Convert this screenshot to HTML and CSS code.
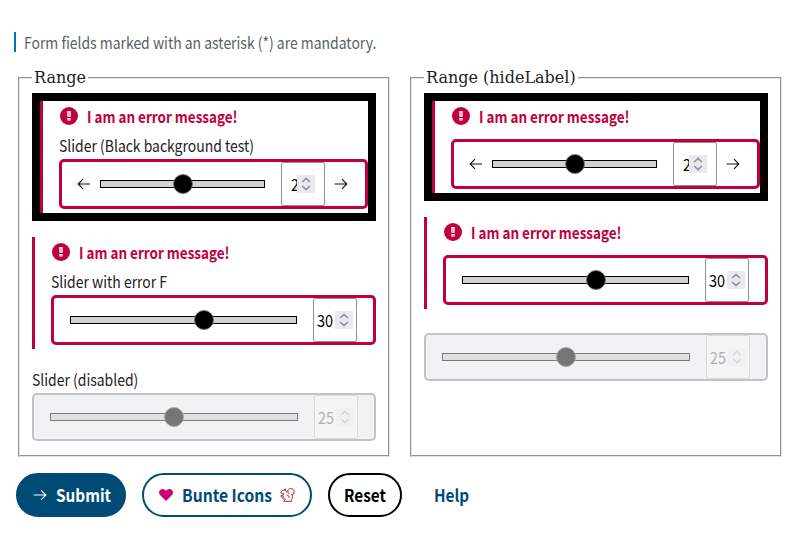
FILE: index.html
```
<!DOCTYPE html>
<html lang="en">
<head>
<meta charset="utf-8">
<title>Range</title>
<link rel="stylesheet" href="styles.css">
</head>
<body>
<svg class="defs" width="0" height="0">
  <symbol id="alert" viewBox="0 0 18 18"><circle cx="9" cy="9" r="9" fill="#c0003c"/><path d="M7.3 4h3.4v5.8H7.3zM7.3 11h3.4v2.6H7.3z" fill="#fff"/><path d="M9 4.8v4.6M9 11.6v1.5" stroke="#c0003c" stroke-width=".5"/></symbol>
  <symbol id="left" viewBox="0 0 14 12"><path d="M13 6H1.4M6 1.2 1.2 6 6 10.8" fill="none" stroke="currentColor" stroke-width="1.1"/></symbol>
  <symbol id="right" viewBox="0 0 14 12"><path d="M.7 6h11.9M8 1.2 12.8 6 8 10.8" fill="none" stroke="currentColor" stroke-width="1.1"/></symbol>
  <symbol id="spin" viewBox="0 0 18 18"><path d="M5.2 7 9 3.4 12.8 7M5.2 11 9 14.6 12.8 11" fill="none" stroke="currentColor" stroke-width="1.5"/></symbol>
</svg>
<p class="hint"><span class="narrow">Form fields marked with an asterisk (*) are mandatory.</span></p>
<main class="columns">
  <fieldset>
    <legend>Range</legend>
    <div class="black">
      <div class="field error">
        <div class="msg"><svg><use href="#alert"/></svg><span>I am an error message!</span></div>
        <div class="label"><span class="narrow">Slider (Black background test)</span></div>
        <div class="box with-icons">
          <svg class="arrow"><use href="#left"/></svg>
          <div class="track"><i class="thumb half"></i></div>
          <div class="number clipped"><span>2</span><svg><use href="#spin"/></svg></div>
          <svg class="arrow"><use href="#right"/></svg>
        </div>
      </div>
    </div>
    <div class="field error">
      <div class="msg"><svg><use href="#alert"/></svg><span>I am an error message!</span></div>
      <div class="label"><span class="narrow">Slider with error F</span></div>
      <div class="box">
        <div class="track"><i class="thumb sixty"></i></div>
        <div class="number"><span>30</span><svg><use href="#spin"/></svg></div>
      </div>
    </div>
    <div class="field disabled">
      <div class="label"><span class="narrow">Slider (disabled)</span></div>
      <div class="box">
        <div class="track"><i class="thumb half"></i></div>
        <div class="number"><span>25</span><svg><use href="#spin"/></svg></div>
      </div>
    </div>
  </fieldset>
  <fieldset>
    <legend>Range (hideLabel)</legend>
    <div class="black">
      <div class="field error no-label">
        <div class="msg"><svg><use href="#alert"/></svg><span>I am an error message!</span></div>
        <div class="box with-icons">
          <svg class="arrow"><use href="#left"/></svg>
          <div class="track"><i class="thumb half"></i></div>
          <div class="number clipped"><span>2</span><svg><use href="#spin"/></svg></div>
          <svg class="arrow"><use href="#right"/></svg>
        </div>
      </div>
    </div>
    <div class="field error no-label">
      <div class="msg"><svg><use href="#alert"/></svg><span>I am an error message!</span></div>
      <div class="box">
        <div class="track"><i class="thumb sixty"></i></div>
        <div class="number"><span>30</span><svg><use href="#spin"/></svg></div>
      </div>
    </div>
    <div class="field disabled no-label">
      <div class="box">
        <div class="track"><i class="thumb half"></i></div>
        <div class="number"><span>25</span><svg><use href="#spin"/></svg></div>
      </div>
    </div>
  </fieldset>
</main>
<footer class="actions">
  <button class="submit"><svg class="arrow"><use href="#right"/></svg><span>Submit</span></button>
  <button class="bunte">
    <svg width="14" height="12" viewBox="0 0 14 12"><path d="M7 12 1 6C-1.3 3 .8 0 3.6 0 5.3 0 6.4 1 7 2 7.6 1 8.7 0 10.4 0c2.8 0 4.9 3 2.6 6z" fill="#cc0070"/></svg>
    <span>Bunte Icons</span>
    <svg width="15" height="14" viewBox="0 0 15 14" fill="none" stroke="#bb1e1e" stroke-width="1" stroke-linejoin="round"><path d="M6.9 4.6C6.6 3.7 6.2 3.2 5.6 2.6L5.2.8 4.5 2.3C2.6 2 1.1 3.2.8 4.7c.6.9 1.8.9 2.8.9L3.2 7.3.9 7.8c-.2 1 .8 1.2 2.5.9L2.6 10.4c.6 1 1.7.7 2.6.2C6 12 4.5 11.9 3.6 13.3h7.9c-.6-1-.1-1.8.6-2.8.9-1.4.7-3-.8-4.1 1.4.3 2.9-.4 2.9-2.4C14.2 2 12.8.6 10.8.6 8.8.6 7.6 1.8 7.8 3.4c.1 1 .9 1.6 1.3 2.6"/><path d="M6.6 7.2C8.4 7.1 9.4 8.2 9.1 10"/></svg>
  </button>
  <button class="reset"><span>Reset</span></button>
  <button class="help"><span>Help</span></button>
</footer>
</body>
</html>
```
FILE: styles.css
```
* { box-sizing: border-box; }
body {
  margin: 0;
  padding: 32px 16px 0 14px;
  background: #fff;
  color: #222;
  font: 16px/20px "Noto Sans CJK SC", "Noto Sans", sans-serif;
}
.defs { display: none; }
svg { display: block; flex: none; }
.narrow {
  display: inline-block;
  transform: scaleX(.872);
  transform-origin: left;
}
.hint {
  margin: 0;
  height: 20px;
  padding-left: 8px;
  border-left: 2px solid #0074ba;
  color: #576164;
  white-space: nowrap;
}
.columns {
  display: grid;
  grid-template-columns: 372px 372px;
  gap: 20px;
  padding: 16px 0 0 4px;
}
fieldset {
  min-width: 0;
  margin: 0;
  padding: 6px 12px 14px;
  border: 2px groove #e2e4e6;
}
legend {
  padding: 0 2px;
  font: 16px/19px "DejaVu Serif", serif;
}
.black { border: 8px solid #000; margin-bottom: 16px; }
.field.error {
  border-left: 3px solid #c0003c;
  padding: 0 0 4px 16px;
  margin-bottom: 16px;
}
.black .field { margin-bottom: 0; }
.msg {
  display: flex;
  align-items: center;
  gap: 9px;
  height: 31px;
  padding: 0 0 2px 1px;
  color: #c0003c;
  font-weight: 700;
}
.msg svg { width: 18px; height: 18px; margin-top: 1px; }
.msg span { transform: scaleX(.841); transform-origin: left; }
.label { height: 27px; line-height: 27px; }
.disabled .label { height: 28px; line-height: 29px; }
.no-label .msg { margin-bottom: 7px; }
.disabled.no-label { margin-top: 24px; }
.box {
  display: flex;
  align-items: center;
  height: 50px;
  padding: 0 16px;
  border: 3px solid #c0003c;
  border-radius: 5px;
}
.disabled .box {
  height: 48px;
  border: 2px solid #bec5c9;
  background: #f0f2f4;
}
.arrow { width: 14px; height: 12px; color: #111; }
.track {
  flex: 1;
  position: relative;
  height: 8px;
  margin-right: 16px;
  border: 1px solid #000;
  background: #d2d2d2;
}
.box .arrow:first-child { margin: 0 9px 0 -1px; }
.box .arrow:last-child { margin-left: 9px; }
.with-icons { padding-right: 17px; }
.thumb {
  position: absolute;
  top: -7px;
  width: 20px;
  height: 20px;
  margin-left: -10px;
  border: 1px solid #777;
  border-radius: 50%;
  background: #000;
}
.half { left: 50%; }
.with-icons .half { left: 50.3%; }
.sixty { left: 59.2%; }
.number {
  display: flex;
  align-items: center;
  width: 44px;
  height: 44px;
  padding: 0 3px;
  border: 1px solid #8f8f9d;
  border-radius: 2px;
  background: #fff;
  color: #000;
}
.number span {
  width: 18px;
  transform: scaleX(.9);
  transform-origin: left;
}
.number svg {
  position: relative;
  width: 18px;
  height: 18px;
  background: #e9e9ed;
  color: #8f8f9d;
}
.number.clipped { padding: 0 9px; }
.clipped span { width: 6px; }
.disabled .track { border-color: #7b7b7b; background: #e0e0e0; }
.disabled .thumb { background: #757575; border-color: #aaa; }
.disabled .number { border-color: #dcdddf; background: #f5f5f5; color: #b0b0b0; }
.disabled .number svg { background: #f0f1f3; color: #d6d6db; }
.actions { display: flex; gap: 16px; padding: 16px 0 0 2px; }
button {
  display: flex;
  align-items: center;
  justify-content: flex-start;
  height: 44px;
  padding: 0 0 0 15px;
  border: 2px solid #004b76;
  border-radius: 22px;
  background: #fff;
  color: #004b76;
  font: 700 17px/20px "Noto Sans CJK SC", sans-serif;
  white-space: nowrap;
}
button span { transform: scaleX(.9); transform-origin: left; }
.submit { width: 110px; background: #004b76; color: #fff; }
.submit .arrow { margin-right: 9px; color: #fff; }
.bunte { width: 170px; }
.bunte span { width: 98px; margin-left: 9px; transform: scaleX(.92); }
.reset { width: 74px; padding-left: 14px; border-color: #000; color: #000; }
.help { width: 68px; padding-left: 14px; border-color: transparent; }
```
